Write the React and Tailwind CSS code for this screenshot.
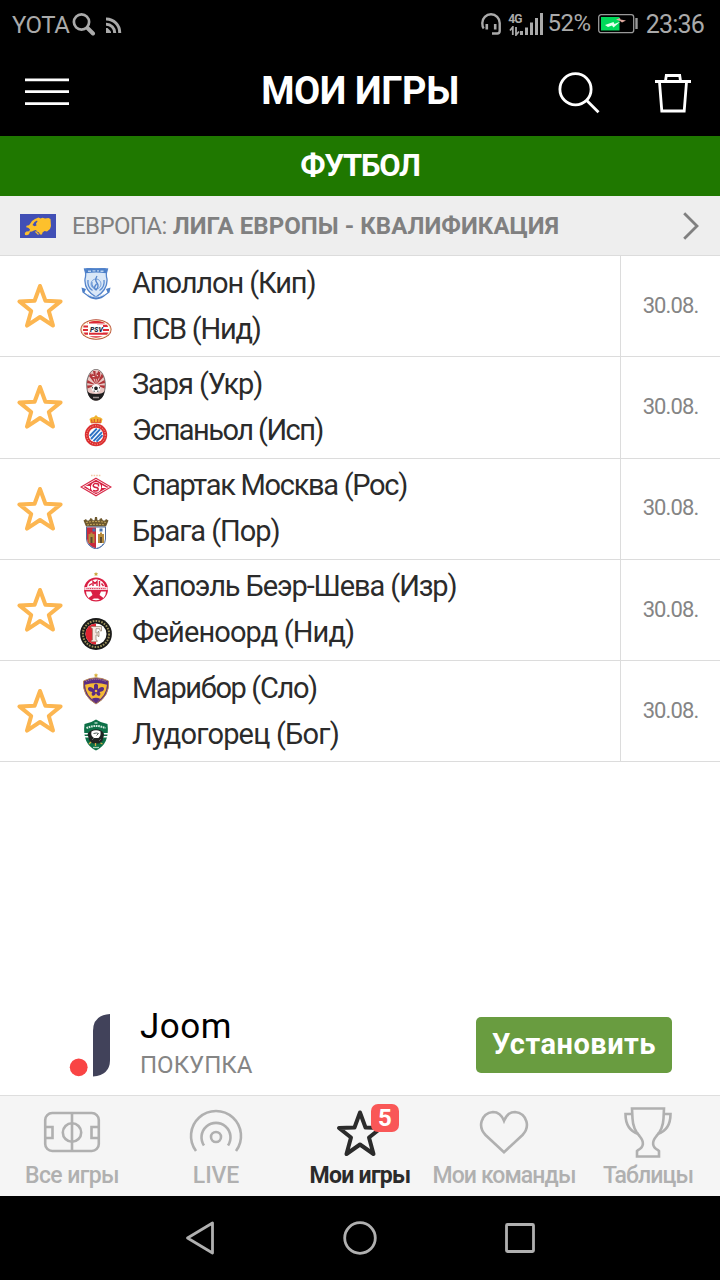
import clsx from 'clsx';

const STAR = 'M24 4 29.4 18.8 44.6 19.4 32.8 29 37 43.6 24 35 11 43.6 15.2 29 3.4 19.4 18.6 18.8Z';

function Apollon() {
    return (
        <svg viewBox="0 0 32 32" className="size-8">
            <path d="M4.5 1Q16-.8 27.500 1L26.500 4.500Q26 8 27 11q.8 11-11 18Q4 22 5 11q1-3 .5-6.500Z" fill="#d9e7f7" stroke="#5585cc" strokeWidth="1.300" />
            <path d="M4.500 1.300Q16-.5 27.500 1.300l-1.300 4Q16 3.500 5.800 5.300Z" fill="#4d80c9" />
            <path d="M8 3.200h3m1.500-.3h3m1.500 0h2m1.500.3h3" stroke="#bfd5f0" strokeWidth="1.400" />
            <path d="M1.500 19.500 6 21l-1.500 3.500Q10 29 16 29.500q6-.5 11.500-5L26 21l4.500-1.500-1 5L26 27q-4 4-10 4.500Q10 31 6 27l-3.500-2.500Z" fill="#4f80c8" />
            <path d="M8 12q-1 7 4.500 10.500M24 12q1 7-4.500 10.500M12 14q-1 4 2.500 6" stroke="#5b8bd0" fill="none" strokeWidth="1.300" />
            <circle cx="16" cy="16" r="5" fill="none" stroke="#7aa3dc" />
            <path d="M17 8q-2.500 4 0 7t-1 7q-3-2 .5-6" fill="none" stroke="#5283cb" strokeWidth="1.300" />
            <path d="M8 26.500q8 4.500 16 0" stroke="#a9c5ea" fill="none" strokeWidth="1" strokeDasharray="1.500 1" />
        </svg>
    );
}

function Psv() {
    return (
        <svg viewBox="0 0 32 32" className="size-8">
            <ellipse cx="16" cy="15.500" rx="15.500" ry="10.200" fill="#b5462e" />
            <ellipse cx="16" cy="15.500" rx="14.700" ry="9.500" fill="#f3e4b0" />
            <ellipse cx="16" cy="15.500" rx="13.800" ry="8.700" fill="#fff" />
            <path d="M8 8.600Q16 5 24 8.600l1 1H7ZM17 10.800h10l1.200 2.200H17ZM3.500 11.500h5v2H3.300ZM3 15h5.500v2H3ZM23 15h6v2h-6ZM3.500 18.500h25l-1.600 2.200H5ZM9 22.300h14Q16 25 9 22.300Z" fill="#dc2b35" />
            <path d="M9.500 11h13.500v7.500H9.500Z" fill="#fff" />
            <path d="M8.500 8v15" stroke="#fff" />
            <text x="10" y="17.600" fontSize="7.200" fontStyle="italic" fontWeight="900" textLength="13" lengthAdjust="spacingAndGlyphs" fill="#222b3c">PSV</text>
        </svg>
    );
}

function Zarya() {
    return (
        <svg viewBox="0 0 32 32" className="size-8">
            <ellipse cx="16" cy="16" rx="9.800" ry="16" fill="#77706f" />
            <ellipse cx="16" cy="16" rx="8.800" ry="15.200" fill="#e9c6c2" />
            <path d="M16 16 9 7l2-3Zm0 0L13 2h2.500Zm0 0L18 2l2.500 1.500Zm0 0 6-11.500 1.500 3.500Zm0 0L7.500 11l-.5 3Zm0 0 8.500-5 .5 3Zm0 0-9 .5.500 3Zm0 0 9 .5-.5 3Z" fill="#b03438" />
            <path d="M11.500 6 13 4.500 15 8l2-4.500 3.500 2-1 3.500-3.500 1-3.500-.5Z" fill="#b53a3d" />
            <path d="M12.500 7.500h2m2-1.500 1.500 1" stroke="#f7e7e4" />
            <path d="M7.300 22q1.500 3 8.700 3t8.700-3q-1.200 9-8.700 9.500Q8.500 31 7.300 22Z" fill="#201f20" />
            <circle cx="16" cy="19.300" r="4.400" fill="#f7f7f7" />
            <path d="m16 17.300 2 1.400-.8 2.300h-2.400l-.8-2.300Zm-4 .5 1 .8-1 1.400Zm8 0-1 .8 1 1.400ZM13.300 22.300l.9-1 .7 1.700Zm5.400 0-.9-1-.7 1.700Z" fill="#1e1e20" />
            <path d="M13 28.500h6" stroke="#9a9090" strokeWidth="1.500" />
        </svg>
    );
}

function Espanyol() {
    return (
        <svg viewBox="0 0 32 32" className="size-8">
            <path d="m10.500 8-1-4 2-1.500L14 2l2-2 2 2 2.500.5 2 1.500-1 4Z" fill="#f0b22e" />
            <path d="m12 7-.5-2.500M14.300 7V4m3.400 3V4M20 7l.5-2.500M11 7.700h10" stroke="#dd4b32" strokeWidth="1.100" />
            <circle cx="16" cy="20" r="11.200" fill="#dc2f32" />
            <circle cx="16" cy="20" r="9.300" fill="none" stroke="#f3b5a0" strokeWidth="1" strokeDasharray="1 1.500" />
            <circle cx="16" cy="20" r="7.300" fill="#fff" />
            <path d="m9.800 21 7-7.300M11 24l9-9.700m-6.500 11.800 8.500-9m-5.500 9.600 6-6.500" stroke="#2d72c4" strokeWidth="1.900" />
        </svg>
    );
}

function Spartak() {
    return (
        <svg viewBox="0 0 32 32" className="size-8">
            <path d="M11 4.500h10" stroke="#f3c9a7" strokeWidth="1.600" strokeDasharray="1.600 1" />
            <path d="M16 7.300 31 16 16 24.700 1 16Z" fill="#fff" stroke="#d82a48" strokeWidth="1.200" />
            <path d="M16 8.800 28.500 16 16 23.200 3.500 16Z" fill="#d51f3f" />
            <path d="M4.500 14.800 10 15v3.500ZM27.500 17 22 17v-3Z" fill="#fff" />
            <circle cx="16" cy="16.200" r="5.200" fill="#fff" />
            <path d="M18.500 13q-5-1.500-5.300 1.500 0 1.700 2.800 2t2 2.500q-1.500 1.800-5 .5M18.500 12.500v3" stroke="#d51f3f" strokeWidth="1.500" fill="none" />
        </svg>
    );
}

function Braga() {
    return (
        <svg viewBox="0 0 32 32" className="size-8">
            <path d="M3.500 3.500 6 2l1 1.500h2L10.500 1l2 1v1.300h2L15 0h2l.5 3.300h2V2l2-1L23 3.500h2L26 2l2.500 1.500L26 9.500H6Z" fill="#6d582e" />
            <path d="M6 5.500q10-2 20 0M7 8q9-1.500 18 0" stroke="#c6a75a" strokeWidth="1" strokeDasharray="2 1" fill="none" />
            <path d="M6.500 10h19v12q-.5 7.500-9.500 10-9-2.500-9.500-10Z" fill="#fff" stroke="#4e6b9b" strokeWidth="1" />
            <path d="M7 10.500h9V31.500q-8.500-2.500-9-9.500Z" fill="#c92b3d" />
            <path d="M8.500 17h2v-1.500h2V17h2v9h-6ZM18 17h2v-1.500h2V17h2v9h-6Z" fill="#b58a3d" />
            <path d="M10.500 20h2v6h-2Zm9.500 0h2v6h-2Z" fill="#5b4930" />
            <path d="M12.500 11.500h3v3h-3Zm7 0h3v3h-3Z" fill="#4671ae" />
            <path d="M9 27q3 4 7 4.300 4-.3 7-4.300" fill="none" stroke="#547fbe" strokeDasharray="2 1" />
        </svg>
    );
}

function Hapoel() {
    return (
        <svg viewBox="0 0 32 32" className="size-8">
            <path d="m16 0 .7 1.300 1.500.2-1.100 1 .3 1.500-1.400-.7-1.400.7.3-1.500-1.100-1 1.500-.2Z" fill="#c9a53b" />
            <circle cx="16" cy="17.500" r="12" fill="#d91f43" />
            <path d="M7 15Q8.500 7.700 16 7.300q7.500.4 9 7.700Z" fill="#fff" />
            <path d="M13 14V9.500l2 2 2-2V14M19.500 9v5.500M9 13.500l3-2M23.500 14l-2-2.500" stroke="#d91f43" strokeWidth="1.400" fill="none" />
            <path d="M4.300 15h23.400v3H4.300Z" fill="#f7d5dc" />
            <path d="M6.500 16.600h19" stroke="#d91f43" strokeDasharray="1 .8" />
            <path d="M6 19.500h5l1.500 3.500-4 3Q6 23.500 6 19.500Zm20 0h-5l-1.500 3.500 4 3Q26 23.500 26 19.500ZM12 27.500l2-1h4l2 1q-4 1.500-8 0Z" fill="#fff" />
        </svg>
    );
}

function Feyenoord() {
    return (
        <svg viewBox="0 0 32 32" className="size-8">
            <circle cx="16" cy="16" r="15.900" fill="#1a1a18" />
            <circle cx="16" cy="16" r="13.100" fill="none" stroke="#9f945e" strokeWidth="2" strokeDasharray="1.600 1.300" />
            <circle cx="16" cy="16" r="10.500" fill="#fff" />
            <path d="M16 5.500a10.500 10.500 0 0 0 0 21Z" fill="#e02431" />
            <path d="M11 8.500h10.500v4.500h-1.200l-.8-2.300h-3.500V15h2v-1.500h1v5h-1V17h-2v5l1.200.5v1.200h-6v-1.200l1.200-.5V10.500l-1.400-.7Z" fill="#f6e6e0" stroke="#826f57" strokeWidth=".6" />
        </svg>
    );
}

function Maribor() {
    return (
        <svg viewBox="0 0 32 32" className="size-8">
            <path d="m16 0 .7 1.400 1.500.2-1.100 1.100.3 1.500-1.400-.7-1.400.7.3-1.500-1.100-1.100 1.500-.2Z" fill="#d9ad35" />
            <path d="M3.500 8Q16 1.500 28.500 8 30 23 16 31 2 23 3.500 8Z" fill="#5a2c83" stroke="#b88858" strokeWidth="1" />
            <path d="M6 8.500q10-4.500 20 0" stroke="#b38a91" strokeDasharray="1.200 .8" fill="none" />
            <path d="M5 11.800q11-3.500 22 0-.5 11-11 17.500Q5.500 22.800 5 11.800Z" fill="#f4b935" />
            <path d="M14 12q2-3 4 0v4q4-3.500 6-1 .5 3.500-4.500 4 2 2.500-.5 4-2 0-3-3-1 3-3 3-2.500-1.500-.5-4-5-.5-4.500-4 2-2.500 6 1Z" fill="#5a2c83" />
            <circle cx="16" cy="18" r="1.300" fill="#f4b935" />
            <path d="M11.500 26q4.500-2.500 9 0L16 29.500Z" fill="#5a2c83" />
        </svg>
    );
}

function Ludogorets() {
    return (
        <svg viewBox="0 0 32 32" className="size-8">
            <path d="M16 .5q5 3.500 11.500 4.500Q30 25 16 31.500 2 25 4.500 5 11 4 16 .5Z" fill="#0d7047" />
            <path d="M3.800 14h4.700v1.500H3.800Zm0 3h5v1.500H4Zm19.700-3h4.700v1.500h-4.700Zm0 3h4.700v1.500h-5Z" fill="#fff" />
            <path d="M6.500 9.200q9.500-4.500 19 0" stroke="#d5eadf" strokeWidth="2" strokeDasharray="1.700 .7" fill="none" />
            <path d="M14.500 4h3" stroke="#c5e5d4" strokeWidth="1.300" />
            <path d="M10 12q6-3.500 12 0l2 3-1.500 7-3.500 2.500h-6L9.500 22l-2-7Z" fill="#202423" />
            <path d="M11.500 12.500q4.500-2.500 9 0 .5 4.500-2 6.500h-4.500q-3.500-2-2.500-6.500Z" fill="#fff" />
            <path d="m13.500 14.500 3-.5 2 .5-2 2M12 21l2-2m5 3 2-2" stroke="#55605c" strokeWidth="1" fill="none" />
            <path d="m11 23-2 2m6.500-1v3m5-3 2 1" stroke="#d9ac42" strokeWidth="1.300" />
            <path d="M13 28.500h6" stroke="#a7d4bc" strokeWidth="1.300" />
        </svg>
    );
}

const matches = [
    {
        date: '30.08.',
        home: { name: 'Аполлон (Кип)', crest: Apollon, tracking: 'tracking-[-1.1px]' },
        away: { name: 'ПСВ (Нид)', crest: Psv, tracking: 'tracking-[-1.25px]' },
    },
    {
        date: '30.08.',
        home: { name: 'Заря (Укр)', crest: Zarya, tracking: 'tracking-[-1.1px]' },
        away: { name: 'Эспаньол (Исп)', crest: Espanyol, tracking: 'tracking-[-1.55px]' },
    },
    {
        date: '30.08.',
        home: { name: 'Спартак Москва (Рос)', crest: Spartak, tracking: 'tracking-[-1.3px]' },
        away: { name: 'Брага (Пор)', crest: Braga, tracking: 'tracking-[-1.05px]' },
    },
    {
        date: '30.08.',
        home: { name: 'Хапоэль Беэр-Шева (Изр)', crest: Hapoel, tracking: 'tracking-[-1.1px]' },
        away: { name: 'Фейеноорд (Нид)', crest: Feyenoord, tracking: 'tracking-[-0.87px]' },
    },
    {
        date: '30.08.',
        home: { name: 'Марибор (Сло)', crest: Maribor, tracking: 'tracking-[-1.35px]' },
        away: { name: 'Лудогорец (Бог)', crest: Ludogorets, tracking: 'tracking-[-0.8px]' },
    },
];

function StatusBar() {
    return (
        <div className="flex h-12 items-center bg-black pl-3 pr-4 text-[#aaaaaa]">
            <span className="pt-0.5 text-2xl tracking-[-0.5px]">YOTA</span>
            <svg viewBox="0 0 24 24" className="ml-[3px] size-6" fill="none" stroke="currentColor">
                <circle cx="9.500" cy="10" r="7.600" strokeWidth="2.700" />
                <path d="m15.500 16 5.500 5.500" strokeWidth="4" strokeLinecap="round" />
            </svg>
            <svg viewBox="0 0 16 16" className="ml-[10px] mt-0.5 size-4" fill="none" stroke="currentColor" strokeWidth="3">
                <path d="M0 2A13.500 13.500 0 0 1 13.700 16M0 7.200A8.500 8.500 0 0 1 8.700 16" />
                <path d="M0 11h1.500l3.500 3.500V16H0Z" fill="currentColor" stroke="none" />
            </svg>

            <svg viewBox="0 0 20 22" className="ml-auto h-[22px] w-5" fill="none" stroke="currentColor" strokeWidth="2.400">
                <path d="M2.700 15.500Q1.300 14 1.300 10A8.700 8.700 0 0 1 18.700 10V18q0 2.500-2.500 2.500H11" />
                <path d="M5.800 11v5.500M14.200 11v5.500" strokeWidth="2.600" />
            </svg>
            <div className="ml-[7px] flex w-[13px] flex-col items-center">
                <span className="text-[12px] font-bold leading-[12px] tracking-[-0.8px]">4G</span>
                <svg viewBox="0 0 12 10" className="mt-px h-2.5 w-3" fill="none" stroke="currentColor" strokeWidth="1.800">
                    <path d="M3.800 9V1L1 4.500M7 1v8l3-3.500" />
                </svg>
            </div>
            <svg viewBox="0 0 24 22" className="-ml-px h-[22px] w-6" fill="currentColor">
                <path d="M0 18h3v4H0ZM5 14.500h3V22H5ZM10 9.500h3V22h-3ZM15 5h3v17h-3ZM20 0h3v22h-3Z" />
            </svg>
            <span className="ml-[3px] pb-0.5 text-2xl tracking-[-0.4px]">52%</span>
            <svg viewBox="0 0 41 20" className="ml-[7px] h-5 w-[41px]">
                <rect x=".7" y=".7" width="35" height="18" rx="2.500" fill="none" stroke="#999" strokeWidth="1.300" />
                <rect x="3" y="3" width="18.500" height="13.500" fill="#00d95a" />
                <path d="M38.500 4v11" stroke="#999" strokeWidth="2.400" />
                <path d="m7 11 8.500-3 1 2 6-2.500-7 6-1.500-2-4 1.500Z" fill="#e4ffed" />
                <path d="m18 5.500 4-1.500.5 1.500 5.500 1-4 2-1.500-1.300Z" fill="#dfa9a0" />
            </svg>
            <span className="ml-[7px] pt-0.5 text-[25px] tracking-[-0.8px]">23:36</span>
        </div>
    );
}

function Header() {
    return (
        <header className="flex h-[88px] items-center bg-black text-white">
            <div className="w-[162px] pl-[25px]">
                <svg viewBox="0 0 44 28" className="h-7 w-11" stroke="currentColor" strokeWidth="2.800">
                    <path d="M0 1.800h44M0 13.700h44M0 25.600h44" />
                </svg>
            </div>
            <h1 className="flex-1 pb-0.5 text-center text-[38px] font-bold leading-none tracking-[-0.4px]">МОИ ИГРЫ</h1>
            <div className="flex w-[162px] items-center pt-0.5">
                <svg viewBox="0 0 42 42" className="size-[42px]" fill="none" stroke="currentColor" strokeWidth="2.800">
                    <circle cx="17.500" cy="17.200" r="15.600" />
                    <path d="M28.500 28.200 40.500 40.200" />
                </svg>
                <svg viewBox="0 0 38 40" className="ml-[54px] h-10 w-[38px]" fill="none" stroke="currentColor" strokeWidth="2.800">
                    <path d="M1 8.500h36M11.500 8l.8-5.500h13.400l.8 5.500M5.500 9l2.300 29h22.400L32.500 9" />
                </svg>
            </div>
        </header>
    );
}

function Team({ team }) {
    const Crest = team.crest;
    return (
        <div className="flex h-[46px] items-center">
            <Crest />
            <span className={clsx('ml-5 whitespace-nowrap pb-0.5 text-[29px] leading-none text-[#2b2b2b]', team.tracking)}>{team.name}</span>
        </div>
    );
}

function MatchRow({ match }) {
    return (
        <div className="flex h-[101.3px] border-b-[1.5px] border-[#dcdcdc] bg-white">
            <div className="flex w-20 items-center pl-[15.500px]">
                <svg viewBox="0 0 48 48" className="size-12 text-[#fcb651]" fill="none" stroke="currentColor" strokeWidth="4" strokeLinejoin="round">
                    <path d={STAR} />
                </svg>
            </div>
            <div className="flex-1 pt-[5px]">
                <Team team={match.home} />
                <Team team={match.away} />
            </div>
            <div className="flex w-[100px] items-center justify-center border-l border-[#dcdcdc] pb-0.5 text-[22px] tracking-[-0.9px] text-[#858585]">
                {match.date}
            </div>
        </div>
    );
}

function AdBanner() {
    return (
        <div className="flex h-[100px] items-center bg-white pl-[69px] pr-12">
            <svg viewBox="0 0 42 64" className="h-16 w-[42px]">
                <path d="M24 63.500V18Q24 2 41 1v46Q41 62 24 63.500Z" fill="#41425a" />
                <circle cx="9.700" cy="54.300" r="8.900" fill="#f94444" />
            </svg>
            <div className="ml-[29px] flex flex-col">
                <span className="text-[35px] leading-[40px] tracking-[0.5px] text-black">Joom</span>
                <span className="text-2xl leading-9 text-[#858585]">ПОКУПКА</span>
            </div>
            <button className="ml-auto h-14 w-[196px] rounded-[5px] bg-[#699c40] text-[29px] font-bold tracking-[0.5px] text-white">Установить</button>
        </div>
    );
}

const tabs = [
    {
        label: 'Все игры',
        tracking: 'tracking-[-0.6px]',
        icon: (
            <>
                <rect x="3.200" y="9" width="53.600" height="38" rx="7" />
                <path d="M30 9v38M3 23h7.500v11H3M57 23h-7.500v11H57" />
                <circle cx="30" cy="28.500" r="9.200" />
            </>
        ),
    },
    {
        label: 'LIVE',
        tracking: 'tracking-[-0.1px]',
        icon: (
            <>
                <circle cx="30" cy="33" r="5" />
                <path d="M18 41.500A14.500 14.500 0 1 1 42 41.500M10 47A25 25 0 1 1 50 47" />
            </>
        ),
    },
    {
        label: 'Мои игры',
        tracking: 'tracking-[-0.7px]',
        active: true,
        badge: 5,
        icon: <path d="M30 8.500 35.500 23.500 51 24 39 33.500 43.500 50 30 40.500 16.500 50 21 33.500 9 24 24.500 23.500Z" strokeWidth="4" strokeLinejoin="round" />,
    },
    {
        label: 'Мои команды',
        tracking: 'tracking-[-0.9px]',
        icon: <path d="M30 48.200 11.500 31Q5.500 24.500 7.600 17.300 10 9 19 8q7.500 0 11 8.800Q33.500 8 41 8q9 1 11.400 9.300 2.100 7.200-3.900 13.700Z" />,
    },
    {
        label: 'Таблицы',
        tracking: 'tracking-[-0.9px]',
        icon: (
            <>
                <path d="M14 4.500h32l-.5 10q-.5 10.500-7 17.500-7.500 9 1.500 14.200l1 .8v5.500H19V47l1-.8q9-5.200 1.500-14.200-6.500-7-7-17.500Z" />
                <path d="M14 10H7.500q0 16 13 20M46 10h6.500q0 16-13 20" />
            </>
        ),
    },
];

function TabBar() {
    return (
        <nav className="grid h-[101px] grid-cols-5 border-t border-[#dedede] bg-[#f5f5f5]">
            {tabs.map(tab => (
                <div key={tab.label} className={clsx('flex flex-col items-center gap-0.5 pt-2', tab.active ? 'text-[#2b2b2b]' : 'text-[#b0b0b0]')}>
                    <div className="relative">
                        <svg viewBox="0 0 60 56" className="h-14 w-[60px]" fill="none" stroke="currentColor" strokeWidth="2.600">
                            {tab.icon}
                        </svg>
                        {tab.badge && (
                            <span className="absolute left-[41px] top-0 flex size-7 items-center justify-center rounded-[7px] bg-[#f95757] text-2xl font-bold text-white">
                                {tab.badge}
                            </span>
                        )}
                    </div>
                    <span className={clsx('whitespace-nowrap text-[23px] leading-7', tab.active ? 'font-bold' : 'font-medium', tab.tracking)}>{tab.label}</span>
                </div>
            ))}
        </nav>
    );
}

function SystemNav() {
    return (
        <div className="flex h-[84px] items-center justify-center gap-[124px] bg-black text-[#b0b0b0]">
            <svg viewBox="0 0 36 36" className="size-9" fill="none" stroke="currentColor" strokeWidth="2.800" strokeLinejoin="round">
                <path d="M30.500 3v30L5.500 18Z" />
            </svg>
            <svg viewBox="0 0 36 36" className="size-9" fill="none" stroke="currentColor" strokeWidth="2.800">
                <circle cx="18" cy="18" r="15.300" />
            </svg>
            <svg viewBox="0 0 36 36" className="size-9" fill="none" stroke="currentColor" strokeWidth="2.800">
                <rect x="4.500" y="4.500" width="27" height="27" rx="1" />
            </svg>
        </div>
    );
}

export default function App() {
    return (
        <div className="flex h-[1280px] w-[720px] flex-col overflow-hidden bg-white font-['Roboto','Liberation_Sans',sans-serif]">
            <StatusBar />
            <Header />
            <h2 className="flex h-[60px] items-center justify-center bg-[#1f7800] text-[31px] font-bold tracking-[-1.2px] text-white">ФУТБОЛ</h2>
            <div className="flex h-[60px] items-center border-b border-[#dcdcdc] bg-[#eeeeee] pl-5 pr-[21px] text-2xl text-[#808080]">
                <svg viewBox="0 0 36 24" className="h-6 w-9">
                    <path d="M0 0h36v24H0Z" fill="#414fb5" />
                    <path d="m5 21-.2-2 1.500-1.500 3-.2.7-2-1.800-1.500-2-.5.3-1.500 2.500-.5 1.500-2 1.500-2.300 3-2 3.500-1.500 2 1 2-.8 2.500.8 3.500-.5 2 1L31 12l-1 3-3 2.500-2.500-.5-2 1.500-.5 2h-2l-1-2-2-1-1-1.500-2 .5-2 1-2 .3-1 2.500-2 1Z" fill="#fdc02c" />
                    <path d="m12.500 11 2-3 2.500-1.500.5 1-1.500 2 .5 2-2 .8Z" fill="#414fb5" />
                    <path d="m15.500 17.500 3 3" stroke="#fdc02c" strokeWidth="1.200" />
                </svg>
                <span className="ml-4 tracking-[-0.6px]">ЕВРОПА:</span>
                <span className="ml-1.5 whitespace-nowrap font-bold tracking-[0.05px]">ЛИГА ЕВРОПЫ - КВАЛИФИКАЦИЯ</span>
                <svg viewBox="0 0 16 28" className="ml-auto h-7 w-4" fill="none" stroke="currentColor" strokeWidth="2.800">
                    <path d="M1.200 1.200 14 14 1.200 26.800" />
                </svg>
            </div>
            <main className="flex-1">
                {matches.map(match => (
                    <MatchRow key={match.home.name} match={match} />
                ))}
            </main>
            <AdBanner />
            <TabBar />
            <SystemNav />
        </div>
    );
}
